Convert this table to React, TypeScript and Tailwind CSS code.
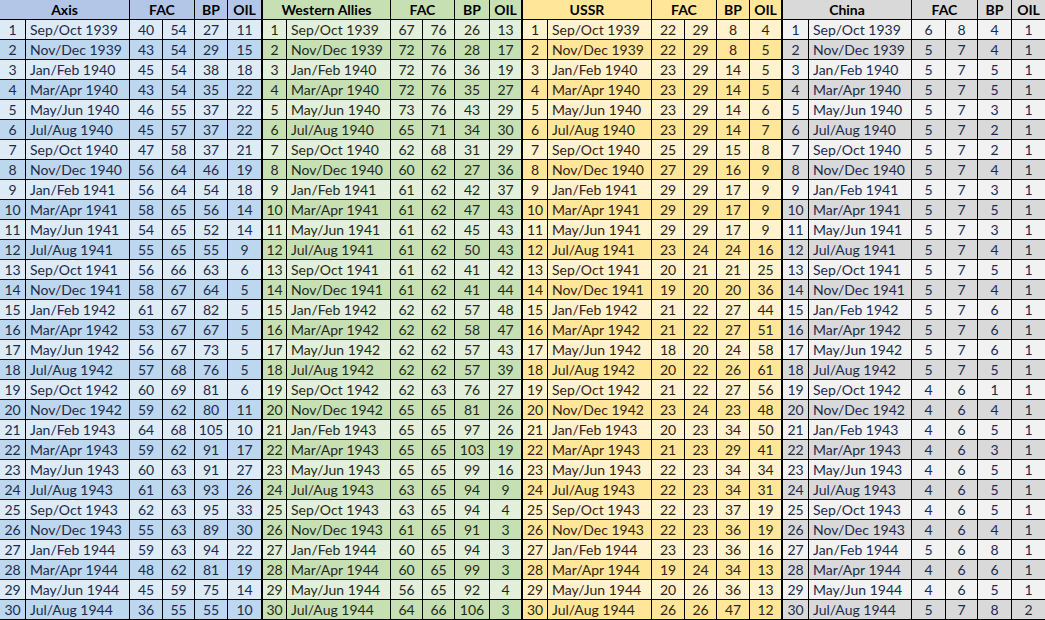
import React from 'react';

type Group = {
  name: string;
  cols: string;
  headBg: string;
  light: string;
  dark: string;
  text: string;
  border: string;
  rows: number[][];
};

const periods = ['Sep/Oct', 'Nov/Dec', 'Jan/Feb', 'Mar/Apr', 'May/Jun', 'Jul/Aug'];
const dates: string[] = [];
for (let i = 0; i < 30; i++) {
  const p = periods[i % 6];
  const year = 1939 + Math.floor((i + 4) / 6);
  dates.push(`${p} ${year}`);
}

const axis = [
  [40, 54, 27, 11], [43, 54, 29, 15], [45, 54, 38, 18], [43, 54, 35, 22], [46, 55, 37, 22],
  [45, 57, 37, 22], [47, 58, 37, 21], [56, 64, 46, 19], [56, 64, 54, 18], [58, 65, 56, 14],
  [54, 65, 52, 14], [55, 65, 55, 9], [56, 66, 63, 6], [58, 67, 64, 5], [61, 67, 82, 5],
  [53, 67, 67, 5], [56, 67, 73, 5], [57, 68, 76, 5], [60, 69, 81, 6], [59, 62, 80, 11],
  [64, 68, 105, 10], [59, 62, 91, 17], [60, 63, 91, 27], [61, 63, 93, 26], [62, 63, 95, 33],
  [55, 63, 89, 30], [59, 63, 94, 22], [48, 62, 81, 19], [45, 59, 75, 14], [36, 55, 55, 10],
];

const allies = [
  [67, 76, 26, 13], [72, 76, 28, 17], [72, 76, 36, 19], [72, 76, 35, 27], [73, 76, 43, 29],
  [65, 71, 34, 30], [62, 68, 31, 29], [60, 62, 27, 36], [61, 62, 42, 37], [61, 62, 47, 43],
  [61, 62, 45, 43], [61, 62, 50, 43], [61, 62, 41, 42], [61, 62, 41, 44], [62, 62, 57, 48],
  [62, 62, 58, 47], [62, 62, 57, 43], [62, 62, 57, 39], [62, 63, 76, 27], [65, 65, 81, 26],
  [65, 65, 97, 26], [65, 65, 103, 19], [65, 65, 99, 16], [63, 65, 94, 9], [63, 65, 94, 4],
  [61, 65, 91, 3], [60, 65, 94, 3], [60, 65, 99, 3], [56, 65, 92, 4], [64, 66, 106, 3],
];

const ussr = [
  [22, 29, 8, 4], [22, 29, 8, 5], [23, 29, 14, 5], [23, 29, 14, 5], [23, 29, 14, 6],
  [23, 29, 14, 7], [25, 29, 15, 8], [27, 29, 16, 9], [29, 29, 17, 9], [29, 29, 17, 9],
  [29, 29, 17, 9], [23, 24, 24, 16], [20, 21, 21, 25], [19, 20, 20, 36], [21, 22, 27, 44],
  [21, 22, 27, 51], [18, 20, 24, 58], [20, 22, 26, 61], [21, 22, 27, 56], [23, 24, 23, 48],
  [20, 23, 34, 50], [21, 23, 29, 41], [22, 23, 34, 34], [22, 23, 34, 31], [22, 23, 37, 19],
  [22, 23, 36, 19], [23, 23, 36, 16], [19, 24, 34, 13], [20, 26, 36, 13], [26, 26, 47, 12],
];

const china = [
  [6, 8, 4, 1], [5, 7, 4, 1], [5, 7, 5, 1], [5, 7, 5, 1], [5, 7, 3, 1],
  [5, 7, 2, 1], [5, 7, 2, 1], [5, 7, 4, 1], [5, 7, 3, 1], [5, 7, 5, 1],
  [5, 7, 3, 1], [5, 7, 4, 1], [5, 7, 5, 1], [5, 7, 4, 1], [5, 7, 6, 1],
  [5, 7, 6, 1], [5, 7, 6, 1], [5, 7, 5, 1], [4, 6, 1, 1], [4, 6, 4, 1],
  [4, 6, 5, 1], [4, 6, 3, 1], [4, 6, 5, 1], [4, 6, 5, 1], [4, 6, 5, 1],
  [4, 6, 4, 1], [5, 6, 8, 1], [4, 6, 6, 1], [4, 6, 5, 1], [5, 7, 8, 2],
];

const groups: Group[] = [
  {
    name: 'Axis',
    cols: 'grid-cols-[26px_104px_33px_32px_33px_33px]',
    headBg: 'bg-[#b4c6e7]',
    light: 'bg-[#ddebf7]',
    dark: 'bg-[#bdd7ee]',
    text: 'text-[#1c2a4c]',
    border: '',
    rows: axis,
  },
  {
    name: 'Western Allies',
    cols: 'grid-cols-[24px_104px_32px_32px_35px_31px]',
    headBg: 'bg-[#c6e0b4]',
    light: 'bg-[#e2efda]',
    dark: 'bg-[#c6e0b4]',
    text: 'text-[#1f2a1c]',
    border: 'border-l-2 border-black',
    rows: allies,
  },
  {
    name: 'USSR',
    cols: 'grid-cols-[25px_104px_33px_32px_33px_31px]',
    headBg: 'bg-[#ffe699]',
    light: 'bg-[#fff2cc]',
    dark: 'bg-[#ffe699]',
    text: 'text-[#2e2414]',
    border: 'border-l-2 border-black',
    rows: ussr,
  },
  {
    name: 'China',
    cols: 'grid-cols-[26px_103px_34px_32px_34px_33px]',
    headBg: 'bg-[#d9d9d9]',
    light: 'bg-[#f2f2f2]',
    dark: 'bg-[#d9d9d9]',
    text: 'text-[#1c2a4c]',
    border: 'border-l-2 border-black',
    rows: china,
  },
];

function Sheet({ g }: { g: Group }) {
  return (
    <div className={`flex flex-col ${g.border}`}>
      <div className={`grid ${g.cols} h-[20px] border-b border-black ${g.headBg} font-bold text-black`}>
        <div className="col-span-2 flex items-center justify-center border-r border-black">{g.name}</div>
        <div className="col-span-2 flex items-center justify-center border-r border-black">FAC</div>
        <div className="flex items-center justify-center border-r border-black">BP</div>
        <div className="flex items-center justify-center">OIL</div>
      </div>
      {g.rows.map((r, i) => (
        <div
          key={i}
          className={`grid ${g.cols} h-[20px] border-b border-black ${i % 2 === 0 ? g.light : g.dark} ${g.text}`}
        >
          <div className="flex items-center justify-center border-r border-black">{i + 1}</div>
          <div className="flex items-center pl-[4px] border-r border-black whitespace-nowrap">{dates[i]}</div>
          <div className="flex items-center justify-center border-r border-black">{r[0]}</div>
          <div className="flex items-center justify-center border-r border-black">{r[1]}</div>
          <div className="flex items-center justify-center border-r border-black">{r[2]}</div>
          <div className="flex items-center justify-center">{r[3]}</div>
        </div>
      ))}
    </div>
  );
}

export default function App() {
  return (
    <div className="w-[1045px] h-[620px] overflow-hidden bg-white flex font-['Lato',sans-serif] text-[14px] leading-none">
      {groups.map(g => (
        <Sheet key={g.name} g={g} />
      ))}
    </div>
  );
}
